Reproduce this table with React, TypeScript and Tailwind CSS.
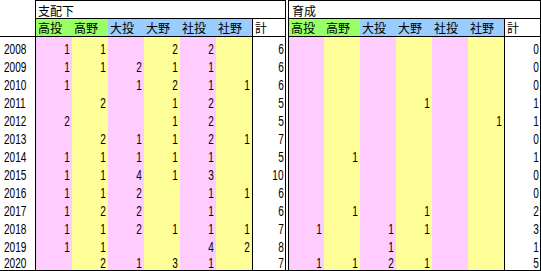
import React from "react";

type Row = { year: number; a: (number | null)[]; at: number; b: (number | null)[]; bt: number };

const _ = null;
const rows: Row[] = [
  { year: 2008, a: [1, 1, _, 2, 2, _], at: 6, b: [_, _, _, _, _, _], bt: 0 },
  { year: 2009, a: [1, 1, 2, 1, 1, _], at: 6, b: [_, _, _, _, _, _], bt: 0 },
  { year: 2010, a: [1, _, 1, 2, 1, 1], at: 6, b: [_, _, _, _, _, _], bt: 0 },
  { year: 2011, a: [_, 2, _, 1, 2, _], at: 5, b: [_, _, _, 1, _, _], bt: 1 },
  { year: 2012, a: [2, _, _, 1, 2, _], at: 5, b: [_, _, _, _, _, 1], bt: 1 },
  { year: 2013, a: [_, 2, 1, 1, 2, 1], at: 7, b: [_, _, _, _, _, _], bt: 0 },
  { year: 2014, a: [1, 1, 1, 1, 1, _], at: 5, b: [_, 1, _, _, _, _], bt: 1 },
  { year: 2015, a: [1, 1, 4, 1, 3, _], at: 10, b: [_, _, _, _, _, _], bt: 0 },
  { year: 2016, a: [1, 1, 2, _, 1, 1], at: 6, b: [_, _, _, _, _, _], bt: 0 },
  { year: 2017, a: [1, 2, 2, _, 1, _], at: 6, b: [_, 1, _, 1, _, _], bt: 2 },
  { year: 2018, a: [1, 1, 2, 1, 1, 1], at: 7, b: [1, _, 1, 1, _, _], bt: 3 },
  { year: 2019, a: [1, 1, _, _, 4, 2], at: 8, b: [_, _, 1, _, _, _], bt: 1 },
  { year: 2020, a: [_, 2, 1, 3, 1, _], at: 7, b: [1, 1, 2, 1, _, _], bt: 5 },
];

const heads = ["高投", "高野", "大投", "大野", "社投", "社野"];
const headBg = ["bg-[#99ff66]", "bg-[#99ff66]", "bg-[#99ccff]", "bg-[#99ccff]", "bg-[#99ccff]", "bg-[#99ccff]"];
const dataBg = ["bg-[#ffccff]", "bg-[#ffff99]", "bg-[#ffccff]", "bg-[#ffff99]", "bg-[#ffccff]", "bg-[#ffff99]"];

function Num({ v }: { v: number | null }) {
  if (v === null) return null;
  return <span className="inline-block origin-right scale-x-[0.72]">{v}</span>;
}

function HeadCells({ first }: { first: boolean }) {
  return (
    <>
      {heads.map((h, i) => (
        <div
          key={h}
          className={`flex w-[36px] items-end border-b border-black pb-[2px] pl-[2px] ${headBg[i]} ${
            first && i === 0 ? "border-l" : ""
          }`}
        >
          {h}
        </div>
      ))}
    </>
  );
}

function DataCells({ vals, first, last }: { vals: (number | null)[]; first: boolean; last: boolean }) {
  return (
    <>
      {vals.map((v, i) => (
        <div
          key={i}
          className={`flex w-[36px] items-end justify-end border-black pr-[2px] ${dataBg[i]} ${
            first && i === 0 ? "border-l" : ""
          } ${last ? "border-b pb-[1px]" : "pb-0"}`}
        >
          <Num v={v} />
        </div>
      ))}
    </>
  );
}

export default function App() {
  return (
    <div className="w-[541px] bg-white font-['Noto_Sans_CJK_JP','Noto_Sans_CJK_SC',sans-serif] text-[12px] leading-[12px] text-black">
      {/* title row */}
      <div className="flex h-[19px]">
        <div className="w-[36px] border-r border-black" />
        <div className="flex w-[250px] items-end border-y border-r border-black pb-[1px] pl-[2px]">支配下</div>
        <div className="w-[2px]" />
        <div className="flex w-[253px] items-end border-x border-y border-black pb-[1px] pl-[3px]">育成</div>
      </div>
      {/* header row */}
      <div className="flex h-[18px]">
        <div className="w-[36px] border-b border-r border-black" />
        <HeadCells first={false} />
        <div className="flex w-[34px] items-end border-x border-b border-black pb-[2px] pl-[2px]">計</div>
        <div className="w-[2px]" />
        <HeadCells first={true} />
        <div className="flex w-[37px] items-end border-x border-b border-black pb-[2px] pl-[2px]">計</div>
      </div>
      {/* data rows */}
      {rows.map((r, idx) => {
        const last = idx === rows.length - 1;
        const bb = last ? "border-b pb-[1px]" : "pb-0";
        return (
          <div
            key={r.year}
            className="flex h-[18px] font-['Liberation_Sans',Arial,sans-serif] text-[14px] leading-[12px]"
          >
            <div className={`flex w-[36px] items-end border-r border-black pl-[4px] ${bb}`}>
              <span className="inline-block origin-left scale-x-[0.72]">{r.year}</span>
            </div>
            <DataCells vals={r.a} first={false} last={last} />
            <div className={`flex w-[34px] items-end justify-end border-x border-black pr-[1px] ${bb}`}>
              <Num v={r.at} />
            </div>
            <div className={`w-[2px] border-black ${last ? "border-b" : ""}`} />
            <DataCells vals={r.b} first={true} last={last} />
            <div className={`flex w-[37px] items-end justify-end border-x border-black pr-[1px] ${bb}`}>
              <Num v={r.bt} />
            </div>
          </div>
        );
      })}
    </div>
  );
}
